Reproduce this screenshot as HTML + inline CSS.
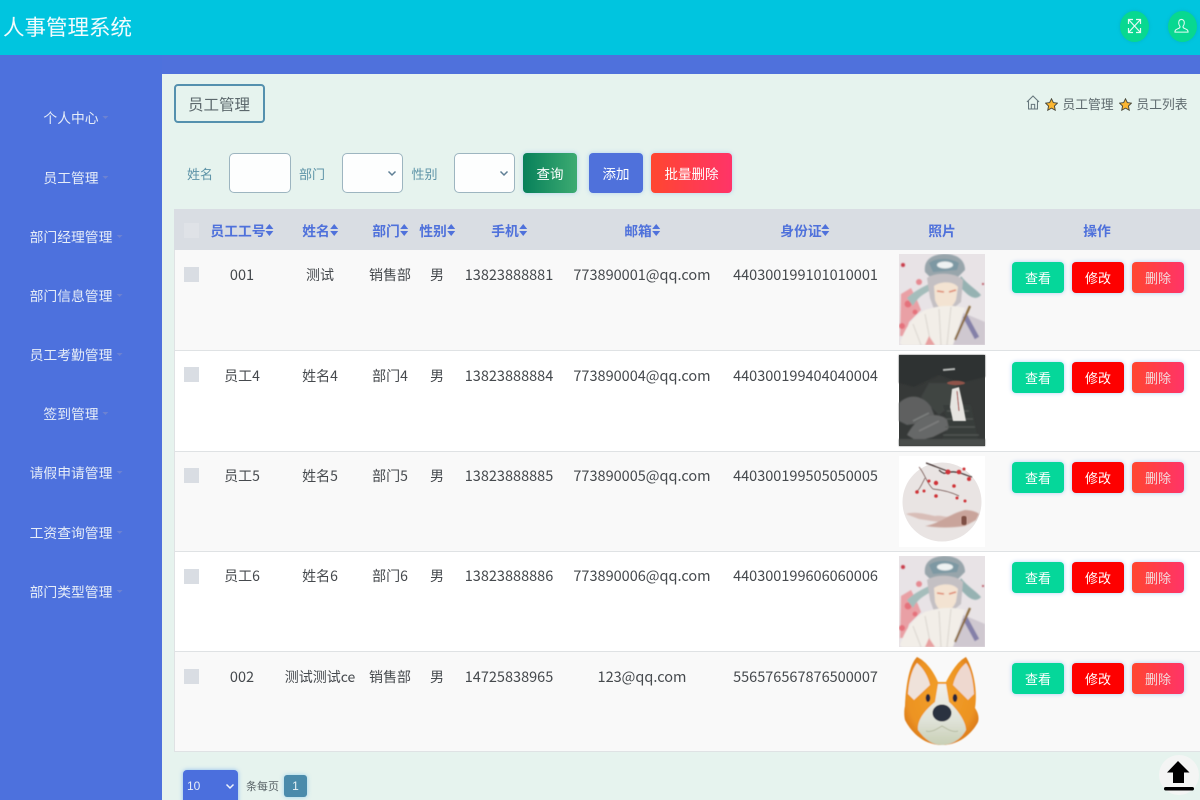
<!DOCTYPE html>
<html lang="zh">
<head>
<meta charset="utf-8">
<title>人事管理系统</title>
<style>
*{box-sizing:border-box;margin:0;padding:0}
html,body{width:1200px;height:800px;overflow:hidden;background:#e6f3ee}
body{position:relative;font-family:"Liberation Sans","Noto Sans CJK SC",sans-serif;color:#4a4f53}
.a{position:absolute;white-space:nowrap}
.t{position:absolute;white-space:nowrap;text-align:center;font-family:"Noto Sans CJK SC","Liberation Sans",sans-serif;line-height:20px;height:20px;transform:translateX(-50%)}
.m{font-size:13.8px;color:#e6edf8}
.m i{position:absolute;left:100%;top:9px;margin-left:4px;border:3.5px solid transparent;border-top-color:#6c82d2;border-bottom:0}
.h{font-size:13.8px;font-weight:700;color:#4f71db}
.h i{position:absolute;left:100%;top:4px;margin-left:0;width:8px;height:12px}
.h i:before,.h i:after{content:"";position:absolute;left:0;border:4px solid transparent}
.h i:before{top:0;border-bottom-color:#4f71db;border-top:0;border-bottom-width:5px}
.h i:after{top:7px;border-top-color:#4f71db;border-bottom:0;border-top-width:5px}
.c{font-size:14px;color:#45494d}
.n{font-size:14.5px}
.row{position:absolute;left:174px;width:1026px;border-bottom:1px solid #dfe2e4}
.cb{position:absolute;left:184px;width:14.5px;height:15px;background:#d9dde3}
.b{position:absolute;width:52px;height:31px;border-radius:4px;color:#fff;font:13px/31px "Noto Sans CJK SC",sans-serif;text-align:center;box-shadow:0 0 4px rgba(80,150,240,.45)}
.v{left:1012px;background:#05d79a}
.e{left:1072px;background:#fe0000}
.d{left:1132px;background:linear-gradient(90deg,#ff4630,#ff3468);color:#f3dcdc}
.l{font-size:13px;color:#5d93a7}
.in{position:absolute;top:153px;height:40px;background:#fdfefe;border:1px solid #9db5c0;border-radius:5px}
.in svg{position:absolute;right:5px;top:16px}
.tb{position:absolute;top:153px;height:40px;border-radius:4px;color:#fff;font:13.5px/40px "Noto Sans CJK SC",sans-serif;text-align:center;box-shadow:0 0 5px rgba(80,150,240,.35)}
</style>
</head>
<body>
<div class="a" style="left:0;top:0;width:1200px;height:55px;background:#00c5df"></div>
<div class="a" style="left:0;top:55px;width:1200px;height:19px;background:#4f71dc"></div>
<div class="a" style="left:0;top:55px;width:162px;height:745px;background:#4d71dd"></div>
<div class="a" style="left:162px;top:74px;width:1038px;height:726px;background:#e6f3ee"></div>

<div class="t" style="left:67.500px;top:12px;height:30px;line-height:30px;font-size:21.5px;color:#f2fbfd">人事管理系统</div>

<div class="a" style="left:1120px;top:11px;width:29px;height:31px;border-radius:50%;background:#08d890;box-shadow:0 0 3px rgba(0,150,150,.35)"></div>
<div class="a" style="left:1168px;top:11px;width:29px;height:31px;border-radius:50%;background:#08d890;box-shadow:0 0 3px rgba(0,150,150,.35)"></div>
<svg class="a" style="left:1127px;top:18px" width="15" height="16" viewBox="0 0 15 16" fill="none" stroke="#e6fbf4" stroke-width="1.2"><path d="M1.500 1.500L13.500 14.500M13.500 1.500L1.500 14.500M1.500 6V1.500H6M9 1.500H13.500V6M1.500 10V14.500H6M9 14.500H13.500V10"/></svg>
<svg class="a" style="left:1174px;top:18px" width="15" height="16" viewBox="0 0 16 16" fill="none" stroke="#e6fbf4" stroke-width="1.100"><path d="M8 1C5.800 1 5 2.800 5 4.800C5 6.500 5.800 7.500 6.300 8.300C6.600 9.200 6.200 10 5 10.500L2.300 11.800C1.300 12.300 1 13.200 1 14.500H15C15 13.200 14.700 12.300 13.700 11.800L11 10.500C9.800 10 9.400 9.200 9.700 8.300C10.200 7.500 11 6.500 11 4.800C11 2.800 10.200 1 8 1Z"/></svg>

<div class="t m" style="left:71px;top:107px">个人中心<i></i></div>
<div class="t m" style="left:71px;top:167px">员工管理<i></i></div>
<div class="t m" style="left:71px;top:226px">部门经理管理<i></i></div>
<div class="t m" style="left:71px;top:285px">部门信息管理<i></i></div>
<div class="t m" style="left:71px;top:344px">员工考勤管理<i></i></div>
<div class="t m" style="left:71px;top:403px">签到管理<i></i></div>
<div class="t m" style="left:71px;top:462px">请假申请管理<i></i></div>
<div class="t m" style="left:71px;top:522px">工资查询管理<i></i></div>
<div class="t m" style="left:71px;top:581px">部门类型管理<i></i></div>

<div class="a" style="left:174px;top:84px;width:91px;height:39px;border:2px solid #5490ae;border-radius:4px"></div>
<div class="t" style="left:219px;top:94px;font-size:15.5px;color:#5c686c">员工管理</div>

<svg class="a" style="left:1026px;top:95px" width="14" height="15" viewBox="0 0 15 16" fill="none" stroke="#66767c" stroke-width="1.100"><path d="M1 7.500L7.500 1L14 7.500M2.700 6.500V15H12.300V6.500M5.700 15V10H9.300V15"/></svg>
<svg class="a" style="left:1045px;top:98px" width="13" height="13" viewBox="0 0 24 24"><path d="M12 1.500L15.400 8.500L23 9.500L17.400 14.800L18.900 22.500L12 18.700L5.100 22.500L6.600 14.800L1 9.500L8.600 8.500Z" fill="#fbb632" stroke="#4c4a3a" stroke-width="1.800"/></svg>
<div class="t" style="left:1088px;top:94px;font-size:12.8px;color:#5f6b6f">员工管理</div>
<svg class="a" style="left:1119px;top:98px" width="13" height="13" viewBox="0 0 24 24"><path d="M12 1.500L15.400 8.500L23 9.500L17.400 14.800L18.900 22.500L12 18.700L5.100 22.500L6.600 14.800L1 9.500L8.600 8.500Z" fill="#fbb632" stroke="#4c4a3a" stroke-width="1.800"/></svg>
<div class="t" style="left:1162px;top:94px;font-size:12.8px;color:#5f6b6f">员工列表</div>

<div class="t l" style="left:200px;top:164px">姓名</div>
<div class="in" style="left:229px;width:62px"></div>
<div class="t l" style="left:312px;top:164px">部门</div>
<div class="in" style="left:342px;width:61px"><svg width="10" height="7" viewBox="0 0 10 7" fill="none" stroke="#5f7f95" stroke-width="1.500"><path d="M1.500 1.500L5 5L8.500 1.500"/></svg></div>
<div class="t l" style="left:424.500px;top:164px">性别</div>
<div class="in" style="left:454px;width:61px"><svg width="10" height="7" viewBox="0 0 10 7" fill="none" stroke="#5f7f95" stroke-width="1.500"><path d="M1.500 1.500L5 5L8.500 1.500"/></svg></div>
<div class="tb" style="left:523px;width:54px;background:linear-gradient(90deg,#07805a,#3dab72)">查询</div>
<div class="tb" style="left:589px;width:54px;background:#4f71db">添加</div>
<div class="tb" style="left:651px;width:81px;background:linear-gradient(90deg,#ff4630,#ff3468)">批量删除</div>

<!-- table -->
<div class="a" style="left:174px;top:209px;width:1026px;height:543px;border-left:1px solid #dfe2e4;border-bottom:1px solid #dfe2e4"></div>
<div class="row" style="top:209px;height:41px;background:#d9dde3;border:0"></div>
<div class="row" style="top:250px;height:101px;background:#f9f9f9;left:175px"></div>
<div class="row" style="top:351px;height:101px;background:#fff;left:175px"></div>
<div class="row" style="top:452px;height:100px;background:#f9f9f9;left:175px"></div>
<div class="row" style="top:552px;height:100px;background:#fff;left:175px"></div>
<div class="row" style="top:652px;height:100px;background:#f9f9f9;left:175px"></div>

<div class="cb" style="top:223px;background:#dfe2e7"></div>
<div class="t h" style="left:238px;top:220px">员工工号<i></i></div>
<div class="t h" style="left:316px;top:220px">姓名<i></i></div>
<div class="t h" style="left:386px;top:220px">部门<i></i></div>
<div class="t h" style="left:433px;top:220px">性别<i></i></div>
<div class="t h" style="left:505px;top:220px">手机<i></i></div>
<div class="t h" style="left:638px;top:220px">邮箱<i></i></div>
<div class="t h" style="left:801px;top:220px">身份证<i></i></div>
<div class="t h" style="left:942px;top:220px">照片</div>
<div class="t h" style="left:1097px;top:220px">操作</div>

<div class="cb" style="top:267px"></div>
<div class="t c n" style="left:242px;top:265px">001</div><div class="t c" style="left:320px;top:265px">测试</div><div class="t c" style="left:390px;top:265px">销售部</div><div class="t c" style="left:437px;top:265px">男</div><div class="t c n" style="left:509px;top:265px">13823888881</div><div class="t c n" style="left:642px;top:265px">773890001@qq.com</div><div class="t c n" style="left:805.500px;top:265px">440300199101010001</div>
<div class="b v" style="top:262px">查看</div><div class="b e" style="top:262px">修改</div><div class="b d" style="top:262px">删除</div>

<div class="cb" style="top:367px"></div>
<div class="t c" style="left:242px;top:366px">员工4</div><div class="t c" style="left:320px;top:366px">姓名4</div><div class="t c" style="left:390px;top:366px">部门4</div><div class="t c" style="left:437px;top:366px">男</div><div class="t c n" style="left:509px;top:366px">13823888884</div><div class="t c n" style="left:642px;top:366px">773890004@qq.com</div><div class="t c n" style="left:805.500px;top:366px">440300199404040004</div>
<div class="b v" style="top:362px">查看</div><div class="b e" style="top:362px">修改</div><div class="b d" style="top:362px">删除</div>

<div class="cb" style="top:468px"></div>
<div class="t c" style="left:242px;top:466px">员工5</div><div class="t c" style="left:320px;top:466px">姓名5</div><div class="t c" style="left:390px;top:466px">部门5</div><div class="t c" style="left:437px;top:466px">男</div><div class="t c n" style="left:509px;top:466px">13823888885</div><div class="t c n" style="left:642px;top:466px">773890005@qq.com</div><div class="t c n" style="left:805.500px;top:466px">440300199505050005</div>
<div class="b v" style="top:462px">查看</div><div class="b e" style="top:462px">修改</div><div class="b d" style="top:462px">删除</div>

<div class="cb" style="top:569px"></div>
<div class="t c" style="left:242px;top:566px">员工6</div><div class="t c" style="left:320px;top:566px">姓名6</div><div class="t c" style="left:390px;top:566px">部门6</div><div class="t c" style="left:437px;top:566px">男</div><div class="t c n" style="left:509px;top:566px">13823888886</div><div class="t c n" style="left:642px;top:566px">773890006@qq.com</div><div class="t c n" style="left:805.500px;top:566px">440300199606060006</div>
<div class="b v" style="top:562px">查看</div><div class="b e" style="top:562px">修改</div><div class="b d" style="top:562px">删除</div>

<div class="cb" style="top:669px"></div>
<div class="t c n" style="left:242px;top:667px">002</div><div class="t c" style="left:320px;top:667px">测试测试ce</div><div class="t c" style="left:390px;top:667px">销售部</div><div class="t c" style="left:437px;top:667px">男</div><div class="t c n" style="left:509px;top:667px">14725838965</div><div class="t c n" style="left:642px;top:667px">123@qq.com</div><div class="t c n" style="left:805.500px;top:667px">556576567876500007</div>
<div class="b v" style="top:663px">查看</div><div class="b e" style="top:663px">修改</div><div class="b d" style="top:663px">删除</div>

<!-- photos -->
<svg class="a" style="left:0;top:0" width="1200" height="800" viewBox="0 0 1200 800">
<defs>
<filter id="s" x="-10%" y="-10%" width="120%" height="120%"><feGaussianBlur stdDeviation=".8"/></filter>
<filter id="s2" x="-10%" y="-10%" width="120%" height="120%"><feGaussianBlur stdDeviation=".4"/></filter>
<radialGradient id="dg" cx=".5" cy=".45" r=".6"><stop offset="0" stop-color="#f3a02a"/><stop offset=".75" stop-color="#ec9322"/><stop offset="1" stop-color="#d9771a"/></radialGradient>
<linearGradient id="mz" x1="0" y1="0" x2="0" y2="1"><stop offset="0" stop-color="#f1efe9"/><stop offset=".6" stop-color="#dfe2d8"/><stop offset="1" stop-color="#c8cfb4"/></linearGradient>
<clipPath id="cp"><rect width="86" height="91"/></clipPath>
<g id="op" clip-path="url(#cp)">
<rect width="86" height="91" fill="#e8e3e6"/>
<g filter="url(#s)">
<circle cx="4" cy="11" r="2" fill="#c83a4a"/><circle cx="84" cy="30" r="1" fill="#b23a4a"/>
<circle cx="20" cy="28" r="3" fill="#e68a92"/>
<path d="M2 40L12 34L18 46L22 56L10 68L6 82L1 82Z" fill="#e9a0a5"/>
<circle cx="9" cy="50" r="3.500" fill="#e5727c"/><circle cx="3" cy="72" r="3" fill="#e5727c"/><circle cx="16" cy="58" r="2.500" fill="#e5727c"/>
<path d="M8 44C14 38 22 34 30 30L32 36C24 40 18 44 14 52Z" fill="#a5bdbb"/>
<path d="M62 22C68 30 78 36 82 41C78 46 72 44 66 38L58 30Z" fill="#96b2b2"/>
<path d="M26 18C24 4 36 0 46 0C58 0 66 6 66 16L58 24L34 26Z" fill="#98a5ab"/>
<path d="M30 9C36 4 50 3 60 9L58 16L34 18Z" fill="#7d98a3"/><ellipse cx="46" cy="11" rx="8" ry="3.500" fill="#eef2f2"/>
<path d="M28 24C36 18 56 18 64 26L62 48L50 58L36 58L31 44Z" fill="#c4c0c3"/>
<path d="M35 32C42 27 54 27 59 33L57 46C54 52 50 56 46 56C42 56 38 52 36 46Z" fill="#f3e3d2"/>
<path d="M38 37L45 38M50 38L57 36" stroke="#d9674a" stroke-width="1.200"/>
<path d="M62 58L86 68V91H52Z" fill="#cfc8d0"/><path d="M66 62L78 84" stroke="#8480a8" stroke-width="5"/>
<path d="M1 89C6 74 14 62 26 56C38 52 52 50 66 54L54 91H3Z" fill="#f2eee8"/>
<path d="M14 70L22 91M26 60L32 91M40 55L42 91M52 53L48 91" stroke="#d8d3cd" stroke-width="1"/>
<path d="M71 52L56 86" stroke="#8a6a3b" stroke-width="2.200"/>
<path d="M30 82L36 91H26Z" fill="#e8a0a0"/>
</g>
</g>
</defs>
<use href="#op" transform="translate(899 254)"/>
<use href="#op" transform="translate(899 556)"/>

<!-- dark ink -->
<g transform="translate(899 355)">
<rect width="86" height="91" fill="#363938"/>
<g filter="url(#s)">
<path d="M0 0H86V22L62 28L40 20L15 32L0 28Z" fill="#2e3130"/>
<path d="M30 28L58 28L55 48L40 60L22 42Z" fill="#414443"/>
<path d="M0 48C10 38 24 40 32 52L36 62L22 68L8 70L0 66Z" fill="#5f6160"/>
<path d="M8 80C18 60 36 56 48 64L50 74L34 82L18 86Z" fill="#666867"/>
<path d="M14 66L30 58M20 76L40 66" stroke="#7f8180" stroke-width="1.500"/>
<path d="M44 50H72L80 90H40L50 72Z" fill="#393c3b"/>
<path d="M48 56H70M46 64H74M46 72H76M44 80H80" stroke="#575c59" stroke-width="1"/>
<path d="M0 84H86V91H0Z" fill="#4a4d4c"/>
</g>
<g filter="url(#s2)">
<path d="M53 34L60 32L64 50L67 66H54L51 52Z" fill="#e6e4e0"/>
<path d="M58 36L60 56" stroke="#9e2f2c" stroke-width="1"/>
<ellipse cx="57" cy="28" rx="9" ry="2.200" fill="#8f5349"/>
<path d="M44 15L56 14" stroke="#b5b8b6" stroke-width="2"/>
</g>
</g>

<!-- plum circle -->
<g transform="translate(899 456)">
<rect width="86" height="91" fill="#fff"/>
<circle cx="43" cy="46" r="39.500" fill="#e9e4e3"/>
<g filter="url(#s)">
<path d="M7 58C16 55 26 58 36 60C44 59 46 62 50 60L40 66L20 63Z" fill="#d8bdb7"/>
<path d="M26 70C40 68 50 58 66 54C72 54 78 56 80 58L77 64L66 70C52 72 40 72 26 70Z" fill="#c9a49b"/>
</g>
<rect x="62.500" y="60" width="5" height="9" rx="2" fill="#7e5044" filter="url(#s2)"/>
<g filter="url(#s2)">
<path d="M27 7C36 10 44 14 52 16C60 15 68 20 73 21M40 14C44 18 46 18 50 16" fill="none" stroke="#3e2f2d" stroke-width="1.200"/>
<path d="M20 11C26 18 28 28 34 33M26 22C22 30 20 34 18 35M34 33C44 34 52 36 60 40" fill="none" stroke="#6b4a46" stroke-width=".7"/>
<g fill="#cf3337"><circle cx="49" cy="16" r="2.500"/><circle cx="60" cy="16" r="2.300"/><circle cx="65" cy="13" r="1.500"/><circle cx="70" cy="23" r="2"/><circle cx="37" cy="27" r="2.200"/><circle cx="30" cy="25" r="1.500"/><circle cx="25" cy="35" r="1.500"/><circle cx="18" cy="36" r="1.800"/><circle cx="37" cy="40" r="1.800"/><circle cx="55" cy="30" r="1.800"/><circle cx="58" cy="42" r="1.500"/><circle cx="66" cy="45" r="1.500"/></g>
</g>
</g>

<!-- corgi -->
<g filter="url(#s2)">
<path d="M905 706C906 682 910 664 917 657C926 661 934 672 938 682H946C951 672 958 661 966 657C973 668 978 690 975 708C979 714 979 719 978 722C974 730 962 745 942 745C922 745 910 730 905 720C904 716 904 710 905 706Z" fill="url(#dg)"/>
<path d="M908 694C909 678 913 668 917 663C923 668 928 676 930 685L914 700Z" fill="#efe2da"/>
<path d="M974 694C973 678 970 668 966 663C960 668 955 676 953 685L968 700Z" fill="#eed8cf"/>
<path d="M938 684L946 684L949 702C958 710 966 722 966 730C960 741 950 745 942 745C933 745 925 740 918 730C917 720 925 710 935 702Z" fill="url(#mz)"/>
<path d="M926 731C932 733 938 728 942 726C946 728 952 733 958 731" fill="none" stroke="#b8bda4" stroke-width="1"/>
<ellipse cx="942" cy="713" rx="9.500" ry="8.500" fill="#2c3040"/>
<ellipse cx="928" cy="698" rx="2.300" ry="4" fill="#25283a"/>
<ellipse cx="955" cy="698" rx="2.300" ry="4" fill="#25283a"/>
</g>

<!-- back to top -->
<circle cx="1179" cy="775" r="20" fill="#f4f5f4"/>
<path d="M1178 761L1189.500 772.500H1184V783H1173V772.500H1167Z" fill="#000"/>
<rect x="1164" y="787" width="30" height="3.500" rx="1.700" fill="#000"/>
</svg>

<!-- pagination -->
<div class="a" style="left:183px;top:770px;width:55px;height:40px;border-radius:4px;background:#4b6fdd;box-shadow:0 0 4px rgba(80,150,240,.6)"></div>
<div class="a" style="left:187px;top:776px;font:12px/20px 'Liberation Sans',sans-serif;color:#e6edf8">10</div>
<svg class="a" style="left:225px;top:783px" width="10" height="7" viewBox="0 0 10 7" fill="none" stroke="#eef3fb" stroke-width="1.500"><path d="M1.500 1.500L5 5L8.500 1.500"/></svg>
<div class="t" style="left:262.500px;top:776px;font-size:11px;color:#5a6468">条每页</div>
<div class="a" style="left:284px;top:775px;width:23px;height:22px;border-radius:3px;background:#4a8bab;color:#e8f2f6;font:12px/22px 'Liberation Sans',sans-serif;text-align:center;box-shadow:0 0 4px rgba(80,180,240,.5)">1</div>
</body>
</html>
